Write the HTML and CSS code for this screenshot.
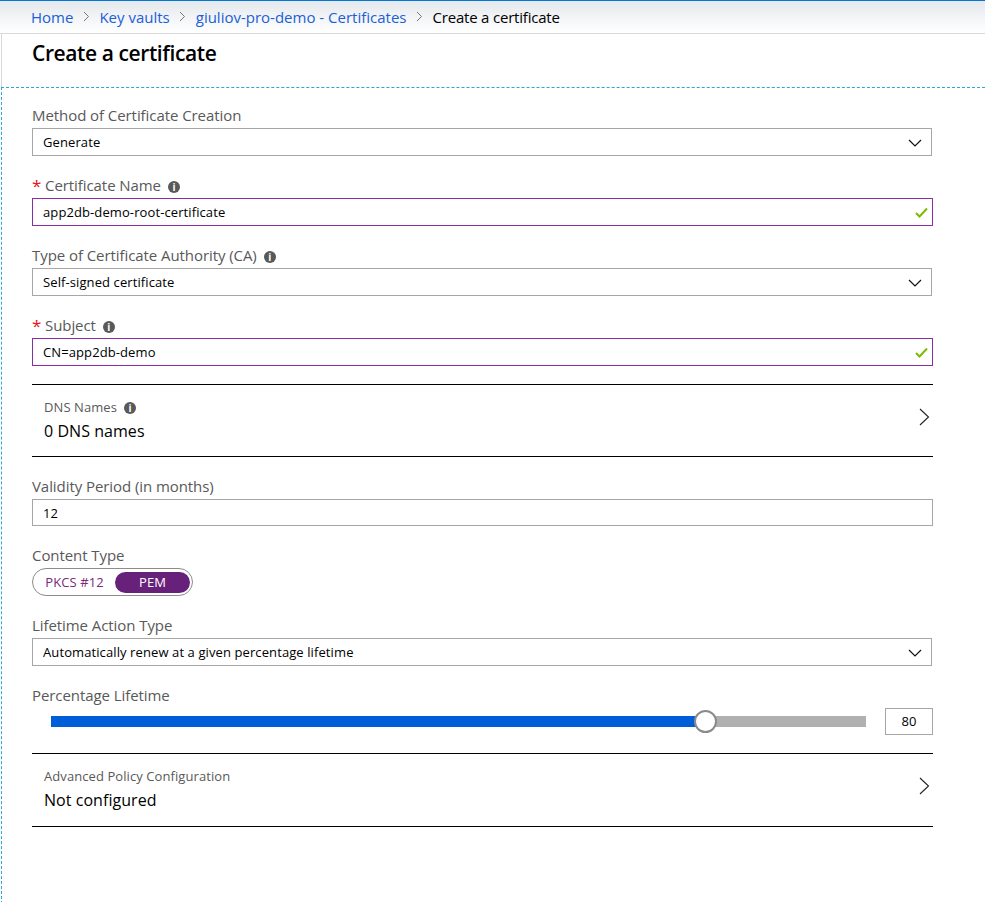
FILE: index.html
```html
<!DOCTYPE html>
<html lang="en">
<head>
	<meta charset="UTF-8">
	<title>Create a certificate</title>
	<link rel="stylesheet" href="styles.css">
</head>
<body>
	<!-- breadcrumb -->
	<div class="crumbs">
		<a href="#">Home</a>
		<svg class="crumb-sep" width="7" height="11" viewBox="0 0 7 11"><path d="M1 1l4.5 4.5L1 10" fill="none" stroke="#777" stroke-width="1"/></svg>
		<a href="#">Key vaults</a>
		<svg class="crumb-sep" width="7" height="11" viewBox="0 0 7 11"><path d="M1 1l4.5 4.5L1 10" fill="none" stroke="#777" stroke-width="1"/></svg>
		<a href="#">giuliov-pro-demo - Certificates</a>
		<svg class="crumb-sep" width="7" height="11" viewBox="0 0 7 11"><path d="M1 1l4.5 4.5L1 10" fill="none" stroke="#777" stroke-width="1"/></svg>
		<span class="crumb-now">Create a certificate</span>
	</div>

	<div class="head">
		<h1>Create a certificate</h1>
	</div>

	<div class="form">
		<div class="field">
			<div class="label">Method of Certificate Creation</div>
			<div class="box select">
				<span>Generate</span>
				<svg width="14" height="8" viewBox="0 0 14 8"><path d="M1 1l6 6 6-6" fill="none" stroke="#111" stroke-width="1.2"/></svg>
			</div>
		</div>

		<div class="field">
			<div class="label"><i class="req">*</i>Certificate Name<b class="info">i</b></div>
			<div class="box valid">
				<span>app2db-demo-root-certificate</span>
				<svg width="13" height="11" viewBox="0 0 13 11"><path d="M1 6l3.5 3.5L12 1.500" fill="none" stroke="#7fba00" stroke-width="2"/></svg>
			</div>
		</div>

		<div class="field">
			<div class="label">Type of Certificate Authority (CA)<b class="info">i</b></div>
			<div class="box select">
				<span>Self-signed certificate</span>
				<svg width="14" height="8" viewBox="0 0 14 8"><path d="M1 1l6 6 6-6" fill="none" stroke="#111" stroke-width="1.2"/></svg>
			</div>
		</div>

		<div class="field">
			<div class="label"><i class="req">*</i>Subject<b class="info">i</b></div>
			<div class="box valid">
				<span>CN=app2db-demo</span>
				<svg width="13" height="11" viewBox="0 0 13 11"><path d="M1 6l3.5 3.5L12 1.500" fill="none" stroke="#7fba00" stroke-width="2"/></svg>
			</div>
		</div>

		<div class="link-row dns">
			<div>
				<div class="link-label">DNS Names<b class="info">i</b></div>
				<div class="link-value">0 DNS names</div>
			</div>
			<svg width="11" height="18" viewBox="0 0 11 18"><path d="M1 1l8.500 8L1 17" fill="none" stroke="#222" stroke-width="1.100"/></svg>
		</div>

		<div class="field">
			<div class="label">Validity Period (in months)</div>
			<div class="box short"><span>12</span></div>
		</div>

		<div class="field">
			<div class="label">Content Type</div>
			<div class="toggle">
				<span class="opt">PKCS #12</span>
				<span class="opt on">PEM</span>
			</div>
		</div>

		<div class="field">
			<div class="label">Lifetime Action Type</div>
			<div class="box select">
				<span>Automatically renew at a given percentage lifetime</span>
				<svg width="14" height="8" viewBox="0 0 14 8"><path d="M1 1l6 6 6-6" fill="none" stroke="#111" stroke-width="1.2"/></svg>
			</div>
		</div>

		<div class="field">
			<div class="label">Percentage Lifetime</div>
			<div class="slider-row">
				<div class="slider">
					<div class="slider-fill"></div>
					<div class="slider-knob"></div>
				</div>
				<div class="num">80</div>
			</div>
		</div>

		<div class="link-row">
			<div>
				<div class="link-label">Advanced Policy Configuration</div>
				<div class="link-value">Not configured</div>
			</div>
			<svg width="11" height="18" viewBox="0 0 11 18"><path d="M1 1l8.500 8L1 17" fill="none" stroke="#222" stroke-width="1.100"/></svg>
		</div>
	</div>
</body>
</html>
```

FILE: styles.css
```css
html, body {
	margin: 0;
	padding: 0;
	background: #fff;
}
body {
	height: 902px;
	overflow: hidden;
	font-family: "Open Sans", "Noto Sans", sans-serif;
	color: #000;
}
.crumbs {
	display: flex;
	align-items: center;
	height: 33px;
	padding-left: 31px;
	border-bottom: 1px solid #d9d9d9;
	font-size: 15px;
	background: linear-gradient(#e4e8ec, #fff);
	box-shadow: inset 0 1px 0 #0078d4;
}
.crumbs a {
	color: #1a5fd8;
	text-decoration: none;
}
.crumb-sep {
	margin: 0 9.500px;
}
.crumb-now {
	letter-spacing: -0.2px;
}
.head {
	height: 53px;
	border-left: 1px solid #d9d9d9;
	margin-left: 1px;
	padding-left: 30px;
}
h1 {
	margin: 0;
	padding-top: 2px;
	font-size: 21px;
	font-weight: 600;
	line-height: 34px;
	letter-spacing: -0.4px;
}
.form {
	border-top: 1px dashed #2aa8dc;
	border-left: 1px dashed #2aa8dc;
	margin-left: 1px;
	padding: 16px 0 0 30px;
	height: 800px;
}
.field {
	margin-bottom: 18px;
}
.label {
	display: flex;
	align-items: center;
	box-sizing: border-box;
	height: 24px;
	padding-bottom: 2px;
	font-size: 15px;
	letter-spacing: -0.07px;
	color: #595959;
}
.req {
	font-style: normal;
	font-size: 17px;
	line-height: 17px;
	color: #e81123;
	width: 13px;
}
.info {
	display: inline-block;
	width: 12px;
	height: 12px;
	margin: 4px 0 0 7px;
	border-radius: 50%;
	background: #595959;
	color: #fff;
	font-size: 10px;
	letter-spacing: 0;
	line-height: 12px;
	text-align: center;
}
.box {
	display: flex;
	align-items: center;
	justify-content: space-between;
	box-sizing: border-box;
	width: 901px;
	height: 28px;
	padding: 0 8px 0 10px;
	border: 1px solid #a6a6a6;
	font-size: 13px;
	letter-spacing: 0.1px;
}
.box svg {
	margin-top: 1px;
}
.select {
	width: 900px;
	padding-right: 9px;
}
.valid {
	border-color: #8a2da5;
	padding-right: 4px;
}
.short {
	height: 27px;
}
.link-row {
	display: flex;
	align-items: center;
	justify-content: space-between;
	box-sizing: border-box;
	width: 901px;
	height: 74px;
	padding: 0 3px 0 12px;
	border-top: 1px solid #000;
	border-bottom: 1px solid #000;
}
.link-row svg {
	margin-bottom: 8px;
}
.dns {
	height: 73px;
	margin-bottom: 18px;
}
.link-label {
	font-size: 13px;
	letter-spacing: 0.08px;
	color: #595959;
	display: flex;
	align-items: center;
	height: 20px;
}
.link-label .info {
	margin-top: 2px;
}
.link-value {
	font-size: 16px;
	letter-spacing: 0.05px;
	line-height: 28px;
}
.toggle {
	display: flex;
	align-items: center;
	box-sizing: border-box;
	width: 161px;
	height: 28px;
	padding: 0 2px 0 3px;
	border: 1px solid #8c8c8c;
	border-radius: 14px;
	font-size: 13px;
}
.opt {
	flex: 1;
	text-align: center;
	color: #7a2a7a;
	height: 21px;
	line-height: 21px;
	letter-spacing: 0.1px;
	padding-right: 2px;
}
.opt.on {
	flex: 0 0 75px;
	padding-right: 0;
	border-radius: 11px;
	background: #68217a;
	color: #fff;
}
.slider-row {
	display: flex;
	align-items: center;
	padding-left: 19px;
}
.slider {
	position: relative;
	width: 815px;
	height: 11px;
	background: #b0b0b0;
}
.slider-fill {
	width: 80%;
	height: 100%;
	background: #005fd8;
}
.slider-knob {
	position: absolute;
	left: 643px;
	top: -6px;
	box-sizing: border-box;
	width: 23px;
	height: 23px;
	border: 2px solid #8a8a8a;
	border-radius: 50%;
	background: #fff;
}
.num {
	box-sizing: border-box;
	width: 48px;
	height: 27px;
	margin-left: 19px;
	border: 1px solid #a6a6a6;
	font-size: 13px;
	line-height: 25px;
	text-align: center;
}
```
